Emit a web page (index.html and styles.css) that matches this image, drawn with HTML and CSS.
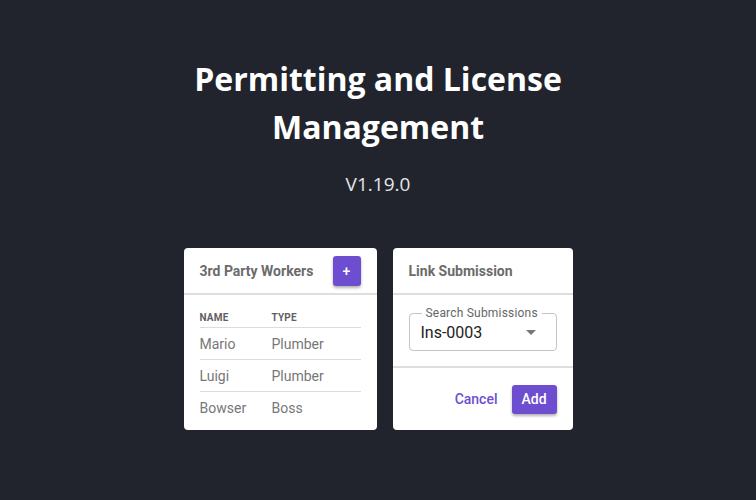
FILE: index.html
```html
<!DOCTYPE html>
<html>
<head>
<meta charset="utf-8">
<link rel="stylesheet" href="styles.css">
</head>
<body>
<main class="page">
  <h1 class="title">Permitting and License<br>Management</h1>
  <p class="version">V1.19.0</p>
  <div class="cards">
    <section class="card card-workers">
      <header class="card-head">
        <h2 class="card-title">3rd Party Workers</h2>
        <button class="btn-plus">+</button>
      </header>
      <div class="card-body">
        <table class="tbl">
          <thead><tr><th>Name</th><th>Type</th></tr></thead>
          <tbody>
            <tr><td>Mario</td><td>Plumber</td></tr>
            <tr><td>Luigi</td><td>Plumber</td></tr>
            <tr><td>Bowser</td><td>Boss</td></tr>
          </tbody>
        </table>
      </div>
    </section>
    <section class="card card-link">
      <header class="card-head">
        <h2 class="card-title">Link Submission</h2>
      </header>
      <div class="field-wrap">
        <div class="field">
          <span class="field-label">Search Submissions</span>
          <span class="field-value">Ins-0003</span>
          <span class="caret"></span>
        </div>
      </div>
      <footer class="card-foot">
        <button class="btn-text">Cancel</button>
        <button class="btn-add">Add</button>
      </footer>
    </section>
  </div>
</main>
</body>
</html>
```
FILE: styles.css
```css
html, body { margin: 0; padding: 0; }
body {
  background: #21242d;
  width: 756px;
  height: 500px;
  overflow: hidden;
  font-family: Roboto, "Liberation Sans", sans-serif;
}
.page {
  display: flex;
  flex-direction: column;
  align-items: center;
  padding-top: 55px;
}
.title {
  margin: 0;
  font-family: "Open Sans", sans-serif;
  font-weight: 700;
  font-size: 32px;
  line-height: 48px;
  color: #ffffff;
  text-align: center;
}
.version {
  margin: 20px 0 0;
  font-family: "Open Sans", sans-serif;
  font-size: 19px;
  line-height: 26px;
  color: #e4e5e8;
}
.cards {
  display: flex;
  gap: 16px;
  margin-top: 51px;
  align-items: stretch;
}
.card {
  background: #fff;
  border-radius: 4px;
  display: flex;
  flex-direction: column;
  height: 182px;
  box-sizing: border-box;
}
.card-workers { width: 193px; }
.card-link { width: 180px; }
.card-head {
  height: 45px;
  flex: none;
  display: flex;
  align-items: center;
  justify-content: space-between;
  padding: 0 16px;
  border-bottom: 2px solid #dedede;
}
.card-title {
  margin: 0;
  font-size: 14px;
  font-weight: 700;
  color: #6b6b6b;
}
.btn-plus {
  width: 28px;
  height: 30px;
  border: 0;
  border-radius: 3px;
  background: #6d4ed1;
  color: #fff;
  font-family: Roboto, sans-serif;
  font-size: 14px;
  font-weight: 500;
  padding: 0;
  box-shadow: 0 2px 3px rgba(0,0,0,0.3);
}
.card-body { padding: 16px 16px 0; }
.tbl {
  width: 100%;
  border-collapse: collapse;
}
.tbl th {
  text-align: left;
  font-size: 10px;
  font-weight: 700;
  color: #5f5f5f;
  text-transform: uppercase;
  letter-spacing: 0.2px;
  padding: 0 0 3px;
  height: 13px;
  border-bottom: 1px solid #dcdcdc;
}
.tbl td {
  font-size: 14px;
  color: #777;
  padding: 0;
  height: 31px;
  vertical-align: middle;
}
.tbl tbody tr:not(:last-child) td { border-bottom: 1px solid #dcdcdc; }
.tbl th:first-child, .tbl td:first-child { width: 72px; }
.field-wrap {
  padding: 18px 16px 15px;
  border-bottom: 2px solid #dedede;
}
.field {
  border: 1px solid #c4c4c4;
  border-radius: 4px;
  height: 38px;
  box-sizing: border-box;
  padding: 0 0 0 11px;
  display: flex;
  align-items: center;
  justify-content: space-between;
  position: relative;
}
.field-label {
  position: absolute;
  left: 12px;
  top: -8px;
  font-size: 12px;
  line-height: 14px;
  letter-spacing: 0.2px;
  color: #666;
  padding: 0 4px;
  background: #fff;
}
.field-value {
  font-size: 16px;
  color: #222;
  margin-top: 1px;
}
.caret {
  width: 0;
  height: 0;
  border-left: 5px solid transparent;
  border-right: 5px solid transparent;
  border-top: 5px solid #777;
  margin-right: 20px;
}
.card-foot {
  flex: 1;
  display: flex;
  justify-content: flex-end;
  align-items: center;
  gap: 14px;
  padding: 0 16px;
}
.btn-text {
  border: 0;
  background: none;
  color: #6d4ed1;
  font-family: Roboto, sans-serif;
  font-size: 14px;
  font-weight: 500;
  padding: 0;
}
.btn-add {
  border: 0;
  border-radius: 3px;
  background: #6d4ed1;
  color: #fff;
  font-family: Roboto, sans-serif;
  font-size: 14px;
  font-weight: 500;
  width: 45px;
  height: 29px;
  padding: 0;
  box-shadow: 0 2px 3px rgba(0,0,0,0.3);
}
```
